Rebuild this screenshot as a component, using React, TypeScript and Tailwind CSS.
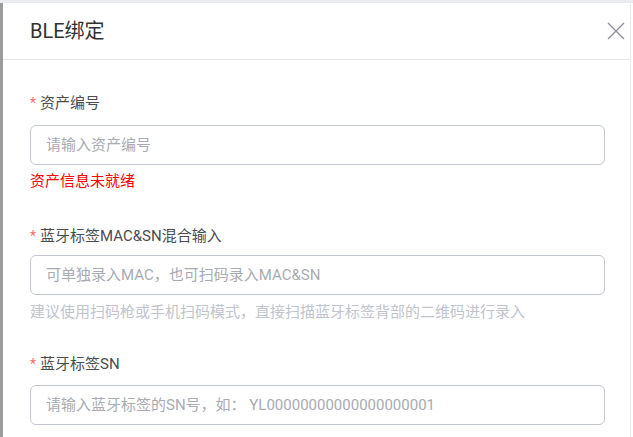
import React from 'react';

const font = { fontFamily: '"Roboto", "Noto Sans CJK SC", sans-serif' };

interface FieldProps {
  label: string;
  placeholder: string;
  labelClass: string;
}

const Field: React.FC<FieldProps> = ({ label, placeholder, labelClass }) => (
  <div className="flex flex-col">
    <div className={`flex items-center h-[20px] text-[14px] text-[#4a4c50] ${labelClass}`}>
      <span className="text-[#f56c6c] mr-[4px] leading-[20px]">*</span>
      <span className="leading-[20px] text-[15px]">{label}</span>
    </div>
    <div className="h-[40px] w-[575px] rounded-[6px] border border-[#c2c6cf] flex items-center px-[15px] text-[15px] text-[#a8abb2]">
      {placeholder}
    </div>
  </div>
);

const App: React.FC = () => {
  return (
    <div className="w-[633px] h-[437px] bg-white overflow-hidden flex flex-col" style={font}>
      {/* top strip */}
      <div className="h-[3px] bg-[#e8eaee] shrink-0" />
      <div className="flex flex-1 min-h-0">
        {/* left edge */}
        <div className="w-[3px] bg-[#9c9c9c] shrink-0" />
        <div className="w-[628px] flex flex-col border-r border-[#ececec]">
          {/* header */}
          <div className="h-[57px] shrink-0 flex items-center justify-between pl-[27px] pr-[5px] border-b border-[#e8e8e8]">
            <span className="text-[20px] text-[#303133] leading-none">BLE绑定</span>
            <svg width="18" height="18" viewBox="0 0 18 18">
              <path d="M1 1L17 17M17 1L1 17" stroke="#8f9196" strokeWidth="1.4" fill="none" />
            </svg>
          </div>

          {/* body */}
          <div className="flex flex-col pl-[27px] pt-[33px]">
            <Field label="资产编号" placeholder="请输入资产编号" labelClass="mb-[12px]" />
            <div className="mt-[6px] h-[20px] leading-[20px] text-[15px] text-[#ff0000]">资产信息未就绪</div>

            <div className="mt-[35px]">
              <Field
                label="蓝牙标签MAC&SN混合输入"
                placeholder="可单独录入MAC，也可扫码录入MAC&SN"
                labelClass="mb-[9px]"
              />
            </div>
            <div className="mt-[7px] h-[20px] leading-[20px] text-[15px] text-[#c0c4cc]">
              建议使用扫码枪或手机扫码模式，直接扫描蓝牙标签背部的二维码进行录入
            </div>

            <div className="mt-[32px]">
              <Field
                label="蓝牙标签SN"
                placeholder="请输入蓝牙标签的SN号，如： YL00000000000000000001"
                labelClass="mb-[11px]"
              />
            </div>
          </div>
        </div>
      </div>
    </div>
  );
};

export default App;
